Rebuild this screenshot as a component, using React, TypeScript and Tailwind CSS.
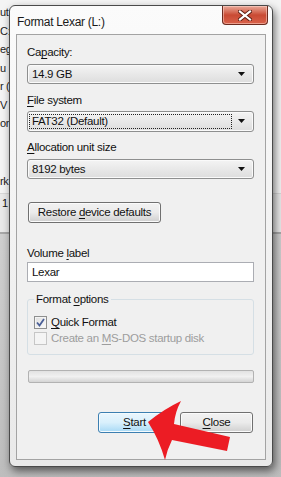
import type { ReactNode } from "react";

const ui = "font-['Liberation_Sans','Arial',sans-serif] text-[11.5px] tracking-[-0.3px] text-[#111]";

function Key({ children }: { children: ReactNode }) {
  return <span className="underline decoration-1 underline-offset-[2px]">{children}</span>;
}

function Label({ children, className = "" }: { children: ReactNode; className?: string }) {
  return <div className={`h-[15px] leading-[15px] ${className}`}>{children}</div>;
}

function Combo({ value, focused = false, className = "" }: { value: string; focused?: boolean; className?: string }) {
  return (
    <div
      className={`flex h-[20px] items-center rounded-[3px] border border-[#8e8f8f] bg-gradient-to-b from-[#f4f4f4] to-[#dddddd] pl-[1px] pr-[5px] shadow-[inset_0_0_0_1px_#fafafa] ${className}`}
    >
      <div
        className={`flex h-[15px] flex-1 items-center px-[2px] leading-[15px] ${
          focused ? "border border-dotted border-[#222]" : "border border-transparent"
        }`}
      >
        {value}
      </div>
      <svg width="12" height="5" viewBox="0 0 12 5" className="ml-[4px]">
        <path d="M2 0h7L5.5 4z" fill="#111" />
      </svg>
    </div>
  );
}

function Button({ children, primary = false, className = "" }: { children: ReactNode; primary?: boolean; className?: string }) {
  return (
    <div
      className={`flex h-[21px] items-center justify-center rounded-[3px] border leading-[15px] ${
        primary
          ? "border-[#3c7fb1] bg-gradient-to-b from-[#eaf6fd] via-[#d9f0fc] to-[#a7d9f5] shadow-[inset_0_0_0_1px_#f4fbfe]"
          : "border-[#707070] bg-gradient-to-b from-[#f2f2f2] via-[#ebebeb] to-[#cfcfcf] shadow-[inset_0_0_0_1px_#fbfbfb]"
      } ${className}`}
    >
      <span>{children}</span>
    </div>
  );
}

function Check({ checked, disabled = false, children }: { checked: boolean; disabled?: boolean; children: ReactNode }) {
  return (
    <div className={`flex h-[14px] items-center gap-[4px] ${disabled ? "text-[#9d9d9d]" : ""}`}>
      <div
        className={`flex h-[13px] w-[13px] items-center justify-center border ${
          disabled
            ? "border-[#c6c6c6] bg-[#f4f4f4]"
            : "border-[#8e8f8f] bg-gradient-to-br from-[#dedede] to-[#fbfbfb] shadow-[inset_0_0_0_1px_#f4f4f4]"
        }`}
      >
        {checked && (
          <svg width="9" height="9" viewBox="0 0 9 9">
            <path d="M1 4.5 3.5 7.5 8 1" fill="none" stroke="#4a5f97" strokeWidth="1.8" />
          </svg>
        )}
      </div>
      <span className="leading-[14px]">{children}</span>
    </div>
  );
}

export default function App() {
  return (
    <div className={`relative h-[477px] w-[281px] overflow-hidden bg-[#d2d2d2] ${ui}`}>
      {/* explorer window behind the dialog */}
      <div className="absolute inset-0 flex flex-col">
        <div className="flex h-[193px] flex-col bg-[#f4f4f4] pl-0 pt-[3px] text-[11px] leading-[18.5px] text-[#222]">
          <span>ut</span>
          <span>C:</span>
          <span>eg</span>
          <span>u</span>
          <span>r (</span>
          <span>V</span>
          <span>or</span>
          <span className="mt-[39px]">rk</span>
        </div>
        <div className="h-[39px] border-t border-[#d8d8d8] bg-[#e9e9e9] pl-[2px] pt-[1px] text-[11px] leading-[16px]">1</div>
        <div className="h-[2px] bg-[#a8a8a8]" />
        <div className="flex-1 bg-gradient-to-b from-[#cfcfcf] to-[#bdbdbd]" />
      </div>

      {/* dialog */}
      <div className="relative ml-[9px] mt-[5px] flex h-[462px] w-[264px] flex-col rounded-[6px] border border-[#4a4a4a] bg-gradient-to-b from-[#fbfbfb] to-[#e9e9e9] shadow-[2px_4px_9px_rgba(0,0,0,0.55)]">
        <div className="flex h-[28px] items-start justify-between">
          <div className="pl-[7px] pt-[8px] text-[12px] leading-[16px] text-[#1a1a1a]">Format Lexar (L:)</div>
          <div className="mr-[4px] flex h-[19px] w-[46px] items-center justify-center rounded-b-[4px] border border-t-0 border-[#6b2a1e] bg-gradient-to-b from-[#e9a99a] via-[#c94a33] to-[#d9614a] shadow-[inset_0_0_0_1px_rgba(255,220,210,0.5)]">
            <svg width="14" height="11" viewBox="0 0 14 11">
              <path d="M2 1.5 12 9.5M12 1.5 2 9.5" stroke="#5a1d12" strokeWidth="4" strokeLinecap="square" />
              <path d="M2 1.5 12 9.5M12 1.5 2 9.5" stroke="#ffffff" strokeWidth="2.2" strokeLinecap="square" />
            </svg>
          </div>
        </div>

        <div className="mx-[6px] flex flex-1 flex-col border border-[#a3a3a3] bg-[#f0f0f0] pl-[10px] pr-[11px] pt-[10px]">
          <Label>
            Ca<Key>p</Key>acity:
          </Label>
          <Combo value="14.9 GB" className="mt-[4px]" />
          <Label className="mt-[9px]">
            <Key>F</Key>ile system
          </Label>
          <Combo value="FAT32 (Default)" focused className="mt-[3px] h-[21px]" />
          <Label className="mt-[8px]">
            <Key>A</Key>llocation unit size
          </Label>
          <Combo value="8192 bytes" className="mt-[4px]" />
          <Button className="ml-[1px] mt-[23px] w-[133px]">
            Restore <Key>d</Key>evice defaults
          </Button>
          <Label className="mt-[23px]">
            Volume <Key>l</Key>abel
          </Label>
          <div className="mt-[1px] flex h-[20px] items-center border border-[#abadb3] bg-white pl-[4px] leading-[15px]">Lexar</div>

          <div className="relative mt-[17px] flex h-[56px] flex-col gap-[2px] rounded-[3px] border border-[#d5dfe5] pl-[6px] pt-[15px]">
            <div className="absolute left-[6px] top-[-8px] bg-[#f0f0f0] px-[2px] leading-[15px]">
              Format <Key>o</Key>ptions
            </div>
            <Check checked>
              <Key>Q</Key>uick Format
            </Check>
            <Check checked={false} disabled>
              Create an <Key>M</Key>S-DOS startup disk
            </Check>
          </div>

          <div className="ml-[1px] mt-[15px] h-[13px] rounded-[2px] border border-[#b2b2b2] bg-gradient-to-b from-[#e2e2e2] via-[#f1f1f1] to-[#d4d4d4]" />

          <div className="mt-[29px] flex justify-end gap-[9px] pr-[1px]">
            <Button primary className="w-[73px]">
              <Key>S</Key>tart
            </Button>
            <Button className="w-[73px]">
              <Key>C</Key>lose
            </Button>
          </div>
        </div>
        <div className="h-[6px]" />
      </div>

      {/* red arrow annotation */}
      <svg className="pointer-events-none absolute left-0 top-0" width="281" height="477" viewBox="0 0 281 477">
        <path
          d="M148 422 Q164 409 181 401 Q175 412 174 424 L230 437 L227 451 L172 440 Q167 450 165 460 Q159 439 148 422 Z"
          fill="#ec1c24"
        />
      </svg>
    </div>
  );
}
